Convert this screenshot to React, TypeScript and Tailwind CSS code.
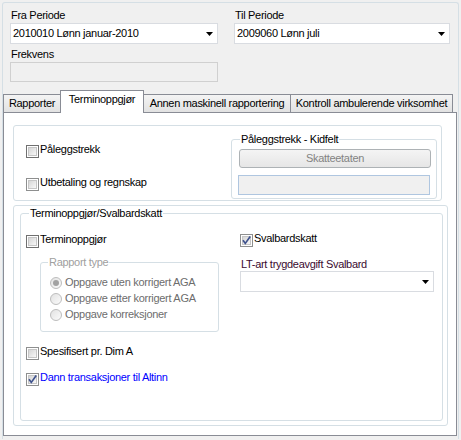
import React from "react";

function Arrow() {
  return (
    <svg width="7" height="4" viewBox="0 0 7 4" className="shrink-0">
      <path d="M0 0h7L3.5 4z" fill="#000" />
    </svg>
  );
}

function Combo({ value, className }: { value?: string; className: string }) {
  return (
    <div className={`flex items-center justify-between h-[21px] bg-white border border-[#d9dce1] pl-[2px] pr-[4px] ${className}`}>
      <span className="leading-[13px]">{value ?? ""}</span>
      <Arrow />
    </div>
  );
}

function CheckBox({ checked, dark }: { checked?: boolean; dark?: boolean }) {
  return (
    <span
      className={`relative block w-[13px] h-[13px] shrink-0 border p-px bg-white ${dark ? "border-[#707070]" : "border-[#8e8f8f]"}`}
    >
      <span className="block w-full h-full border border-[#c6c6c6] bg-linear-to-br from-[#d6d6d6] to-[#f8f8f8]" />
      {checked && (
        <svg className="absolute inset-0" width="11" height="11" viewBox="0 0 11 11">
          <path d="M2 5.2 L4.3 8.4 L9.2 1.6" fill="none" stroke="#3f528d" strokeWidth="1.7" />
        </svg>
      )}
    </span>
  );
}

function CheckRow({ label, checked, dark, className, textClass }: { label: string; checked?: boolean; dark?: boolean; className: string; textClass?: string }) {
  return (
    <div className={`flex items-center h-[13px] ${className}`}>
      <CheckBox checked={checked} dark={dark} />
      <span className={`ml-px mb-[4px] leading-[13px] whitespace-nowrap ${textClass ?? ""}`}>{label}</span>
    </div>
  );
}

function Radio({ label, checked }: { label: string; checked?: boolean }) {
  return (
    <div className="flex items-center h-[16px] pl-[9px]">
      <span className="flex items-center justify-center w-[12px] h-[12px] rounded-full border border-[#bdbdbd] bg-linear-to-br from-[#e2e2e2] to-[#fbfbfb] shrink-0">
        {checked && <span className="block w-[6px] h-[6px] rounded-full bg-[#a2a2a2]" />}
      </span>
      <span className="ml-[3px] mb-[2px] leading-[13px] text-[#6d6d6d] whitespace-nowrap">{label}</span>
    </div>
  );
}

export default function App() {
  return (
    <div className="w-[461px] h-[440px] bg-[#f0f0f0] pt-[2px] pl-[2px] overflow-hidden font-['Liberation_Sans',Arial,sans-serif] text-[11px] leading-[13px] tracking-[-0.3px] text-black">
      <div className="w-[457px] h-[437px] border-t border-l border-r border-[#d5dfe5] rounded-t-[3px]">
        {/* period selectors */}
        <div className="flex pt-[6px] pl-[7px]">
          <div className="w-[208px]">
            <div className="pl-px h-[13px]">Fra Periode</div>
            <Combo value="2010010 Lønn januar-2010" className="mt-px w-[208px]" />
            <div className="pl-px h-[13px] mt-[4px]">Frekvens</div>
            <div className="mt-px w-[208px] h-[20px] bg-[#f0f0f0] border border-[#d0d0d0]" />
          </div>
          <div className="ml-[16px] w-[216px]">
            <div className="pl-px h-[13px]">Til Periode</div>
            <Combo value="2009060 Lønn juli" className="mt-px w-[216px]" />
          </div>
        </div>

        {/* tabs */}
        <div className="flex items-end h-[22px] mt-[8px]">
          <div className="flex items-center justify-center w-[58px] h-[18px] border border-b-0 border-[#898c95] bg-linear-to-b from-[#f4f4f4] to-[#e2e2e2]">
            Rapporter
          </div>
          <div className="relative z-10 flex justify-center w-[84px] h-[23px] -ml-px -mr-px -mb-px pt-[2px] border border-b-0 border-[#898c95] bg-white">
            Terminoppgjør
          </div>
          <div className="flex items-center justify-center w-[148px] h-[18px] border border-b-0 border-[#898c95] bg-linear-to-b from-[#f4f4f4] to-[#e2e2e2]">
            Annen maskinell rapportering
          </div>
          <div className="flex items-center justify-center w-[163px] h-[18px] -ml-px border border-b-0 border-[#898c95] bg-linear-to-b from-[#f4f4f4] to-[#e2e2e2]">
            Kontroll ambulerende virksomhet
          </div>
        </div>

        {/* tab page */}
        <div className="w-[454px] h-[324px] border border-[#898c95] bg-white pt-[12px] pl-[9px]">
          {/* Påleggstrekk group */}
          <div className="flex w-[429px] h-[76px] border border-[#d5dfe5] rounded-[3px]">
            <div className="w-[217px] pl-[12px] pt-[19px]">
              <CheckRow label="Påleggstrekk" dark className="" />
              <CheckRow label="Utbetaling og regnskap" className="mt-[20px]" />
            </div>
            <fieldset className="mt-[7px] w-[206px] self-start border border-[#d5dfe5] rounded-[3px] pb-[3px]">
              <legend className="ml-[8px] px-px leading-[13px]">Påleggstrekk - Kidfelt</legend>
              <div className="mt-[3px] ml-[7px] w-[192px] h-[19px] flex items-center justify-center border border-[#adb2b5] rounded-[3px] bg-linear-to-b from-[#f4f4f4] to-[#e6e6e6] text-[#838383]">
                Skatteetaten
              </div>
              <div className="mt-[7px] ml-[6px] w-[192px] h-[20px] border border-[#afc6e0] bg-[#f0f0f0]" />
            </fieldset>
          </div>

          {/* outer box */}
          <div className="mt-[4px] w-[435px] border border-[#d5dfe5] rounded-[3px] pl-[6px] pt-px pb-[4px]">
            <fieldset className="w-[423px] border border-[#d5dfe5] rounded-[3px] pb-[34px]">
              <legend className="ml-[8px] px-px leading-[13px]">Terminoppgjør/Svalbardskatt</legend>
              <div className="flex">
                <div className="w-[219px]">
                  <CheckRow label="Terminoppgjør" dark className="ml-[5px] mt-[15px]" />
                  <fieldset className="ml-[19px] mt-[8px] w-[179px] border border-[#d5dfe5] rounded-[3px] pb-[8px]">
                    <legend className="ml-[7px] px-px leading-[13px] text-[#a0a0a0]">Rapport type</legend>
                    <div className="mt-[6px]">
                      <Radio label="Oppgave uten korrigert AGA" checked />
                      <Radio label="Oppgave etter korrigert AGA" />
                      <Radio label="Oppgave korreksjoner" />
                    </div>
                  </fieldset>
                  <CheckRow label="Spesifisert pr. Dim A" className="ml-[5px] mt-[15px]" />
                  <CheckRow label="Dann transaksjoner til Altinn" checked className="ml-[5px] mt-[13px]" textClass="text-[#0000ff]" />
                </div>
                <div className="w-[196px]">
                  <CheckRow label="Svalbardskatt" checked className="mt-[14px]" />
                  <div className="mt-[11px] pl-px h-[13px] text-[#3a0a30]">LT-art trygdeavgift Svalbard</div>
                  <Combo className="w-[194px]" />
                </div>
              </div>
            </fieldset>
          </div>
        </div>
      </div>
    </div>
  );
}
